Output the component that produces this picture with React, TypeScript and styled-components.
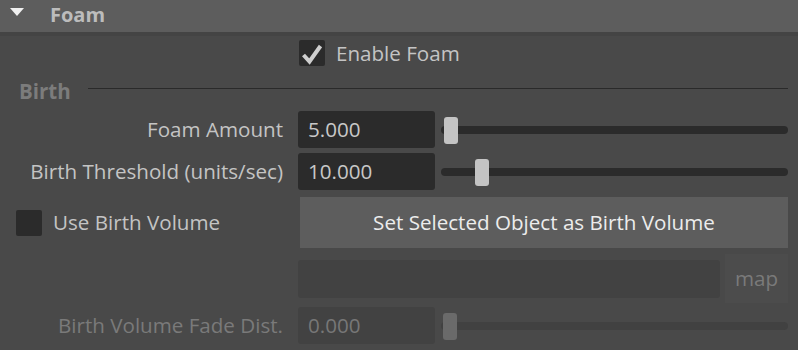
import React from "react";
import styled, { createGlobalStyle } from "styled-components";

const Global = createGlobalStyle`
  html, body { margin: 0; padding: 0; background: #494949; }
  body { font-family: "Open Sans", "Liberation Sans", sans-serif; font-size: 20.6px; }
  * { box-sizing: border-box; }
`;

const Panel = styled.div`
  width: 798px;
  height: 350px;
  overflow: hidden;
  background: #494949;
  display: flex;
  flex-direction: column;
`;

const Header = styled.div`
  height: 32px;
  background: #5d5d5d;
  display: flex;
  align-items: center;
  padding-left: 10px;
  border-bottom: 4px solid #444444;
  box-sizing: content-box;
`;

const Triangle = styled.div`
  width: 0;
  height: 0;
  border-left: 7.5px solid transparent;
  border-right: 7.5px solid transparent;
  border-top: 8px solid #f0f0f0;
  margin-right: 26px;
  margin-top: -8px;
`;

const HeaderTitle = styled.span`
  font-weight: 700;
  font-size: 20px;
  color: #bcbcbc;
  line-height: 1;
  margin-top: -2px;
`;

const Body = styled.div`
  display: flex;
  flex-direction: column;
  padding-right: 10px;
`;

const Row = styled.div<{ $mt: number; $h: number }>`
  display: flex;
  align-items: center;
  margin-top: ${(p) => p.$mt}px;
  height: ${(p) => p.$h}px;
`;

const LabelCell = styled.div<{ $dim?: boolean; $left?: boolean }>`
  width: 283px;
  flex: none;
  margin-right: 15px;
  text-align: right;
  color: ${(p) => (p.$dim ? "#7a7a7a" : "#c4c4c4")};
  white-space: nowrap;
  display: flex;
  align-items: center;
  justify-content: ${(p) => (p.$left ? "flex-start" : "flex-end")};
  padding-left: ${(p) => (p.$left ? "16px" : "0")};
  line-height: 1;
`;

const Box = styled.div<{ $ml?: number }>`
  width: 26px;
  height: 26px;
  flex: none;
  background: #2b2b2b;
  border-radius: 2px;
  margin-left: ${(p) => p.$ml ?? 0}px;
  display: flex;
  align-items: center;
  justify-content: center;
`;

const CheckLabel = styled.span<{ $gap: number }>`
  color: #c4c4c4;
  margin-left: ${(p) => p.$gap}px;
  line-height: 1;
`;

const SectionTitle = styled.span`
  font-weight: 700;
  font-size: 20.5px;
  color: #7c7c7c;
  margin-left: 19px;
  line-height: 1;
`;

const SectionLine = styled.div`
  flex: 1;
  height: 1px;
  background: #2a2a2a;
  margin-left: 17px;
  margin-bottom: 5px;
`;

const Field = styled.div<{ $dim?: boolean; $w?: number; $h?: number }>`
  width: ${(p) => (p.$w ? `${p.$w}px` : "137px")};
  height: ${(p) => p.$h ?? 37}px;
  flex: none;
  background: ${(p) => (p.$dim ? "#424242" : "#2b2b2b")};
  border-radius: 3px;
  color: ${(p) => (p.$dim ? "#777777" : "#c8c8c8")};
  padding-left: 10px;
  display: flex;
  align-items: center;
  line-height: 1;
`;

const Track = styled.div<{ $dim?: boolean }>`
  flex: 1;
  height: 8px;
  margin-left: 6px;
  border-radius: 4px;
  background: ${(p) => (p.$dim ? "#414141" : "#2b2b2b")};
  position: relative;
`;

const Thumb = styled.div<{ $dim?: boolean }>`
  position: absolute;
  top: -9px;
  width: 14px;
  height: 27px;
  border-radius: 3px;
  background: ${(p) => (p.$dim ? "#6a6a6a" : "#c4c4c4")};
`;

const Button = styled.div`
  flex: 1;
  height: 51px;
  margin-left: 2px;
  background: #5d5d5d;
  color: #ececec;
  display: flex;
  align-items: center;
  justify-content: center;
  line-height: 1;
`;

const MapButton = styled.div`
  width: 63px;
  height: 49px;
  margin-left: 5px;
  background: #4c4c4c;
  color: #7a7a7a;
  display: flex;
  align-items: center;
  justify-content: center;
  line-height: 1;
`;

const Check = () => (
  <svg width="26" height="26" viewBox="0 0 26 26">
    <polyline
      points="4.5,15 10.5,21.5 21.5,6"
      fill="none"
      stroke="#cfcfcf"
      strokeWidth="4"
      strokeLinecap="butt"
      strokeLinejoin="miter"
    />
  </svg>
);

const SliderRow = ({
  label,
  value,
  thumb,
  mt,
  dim,
}: {
  label: string;
  value: string;
  thumb: number;
  mt: number;
  dim?: boolean;
}) => (
  <Row $mt={mt} $h={37}>
    <LabelCell $dim={dim}>{label}</LabelCell>
    <Field $dim={dim}>{value}</Field>
    <Track $dim={dim}>
      <Thumb $dim={dim} style={{ left: thumb }} />
    </Track>
  </Row>
);

export default function App() {
  return (
    <>
      <Global />
      <Panel>
        <Header>
          <Triangle />
          <HeaderTitle>Foam</HeaderTitle>
        </Header>
        <Body>
          <Row $mt={4} $h={26}>
            <LabelCell />
            <Box $ml={1}>
              <Check />
            </Box>
            <CheckLabel $gap={11}>Enable Foam</CheckLabel>
          </Row>
          <Row $mt={12} $h={26}>
            <SectionTitle>Birth</SectionTitle>
            <SectionLine />
          </Row>
          <SliderRow mt={7} label="Foam Amount" value="5.000" thumb={3} />
          <SliderRow mt={5} label="Birth Threshold (units/sec)" value="10.000" thumb={34} />
          <Row $mt={7} $h={51}>
            <LabelCell $left>
              <Box />
              <CheckLabel $gap={11}>Use Birth Volume</CheckLabel>
            </LabelCell>
            <Button>Set Selected Object as Birth Volume</Button>
          </Row>
          <Row $mt={6} $h={49}>
            <LabelCell />
            <Field $dim $w={422} $h={38} />
            <MapButton>map</MapButton>
          </Row>
          <SliderRow mt={4} dim label="Birth Volume Fade Dist." value="0.000" thumb={2} />
        </Body>
      </Panel>
    </>
  );
}
